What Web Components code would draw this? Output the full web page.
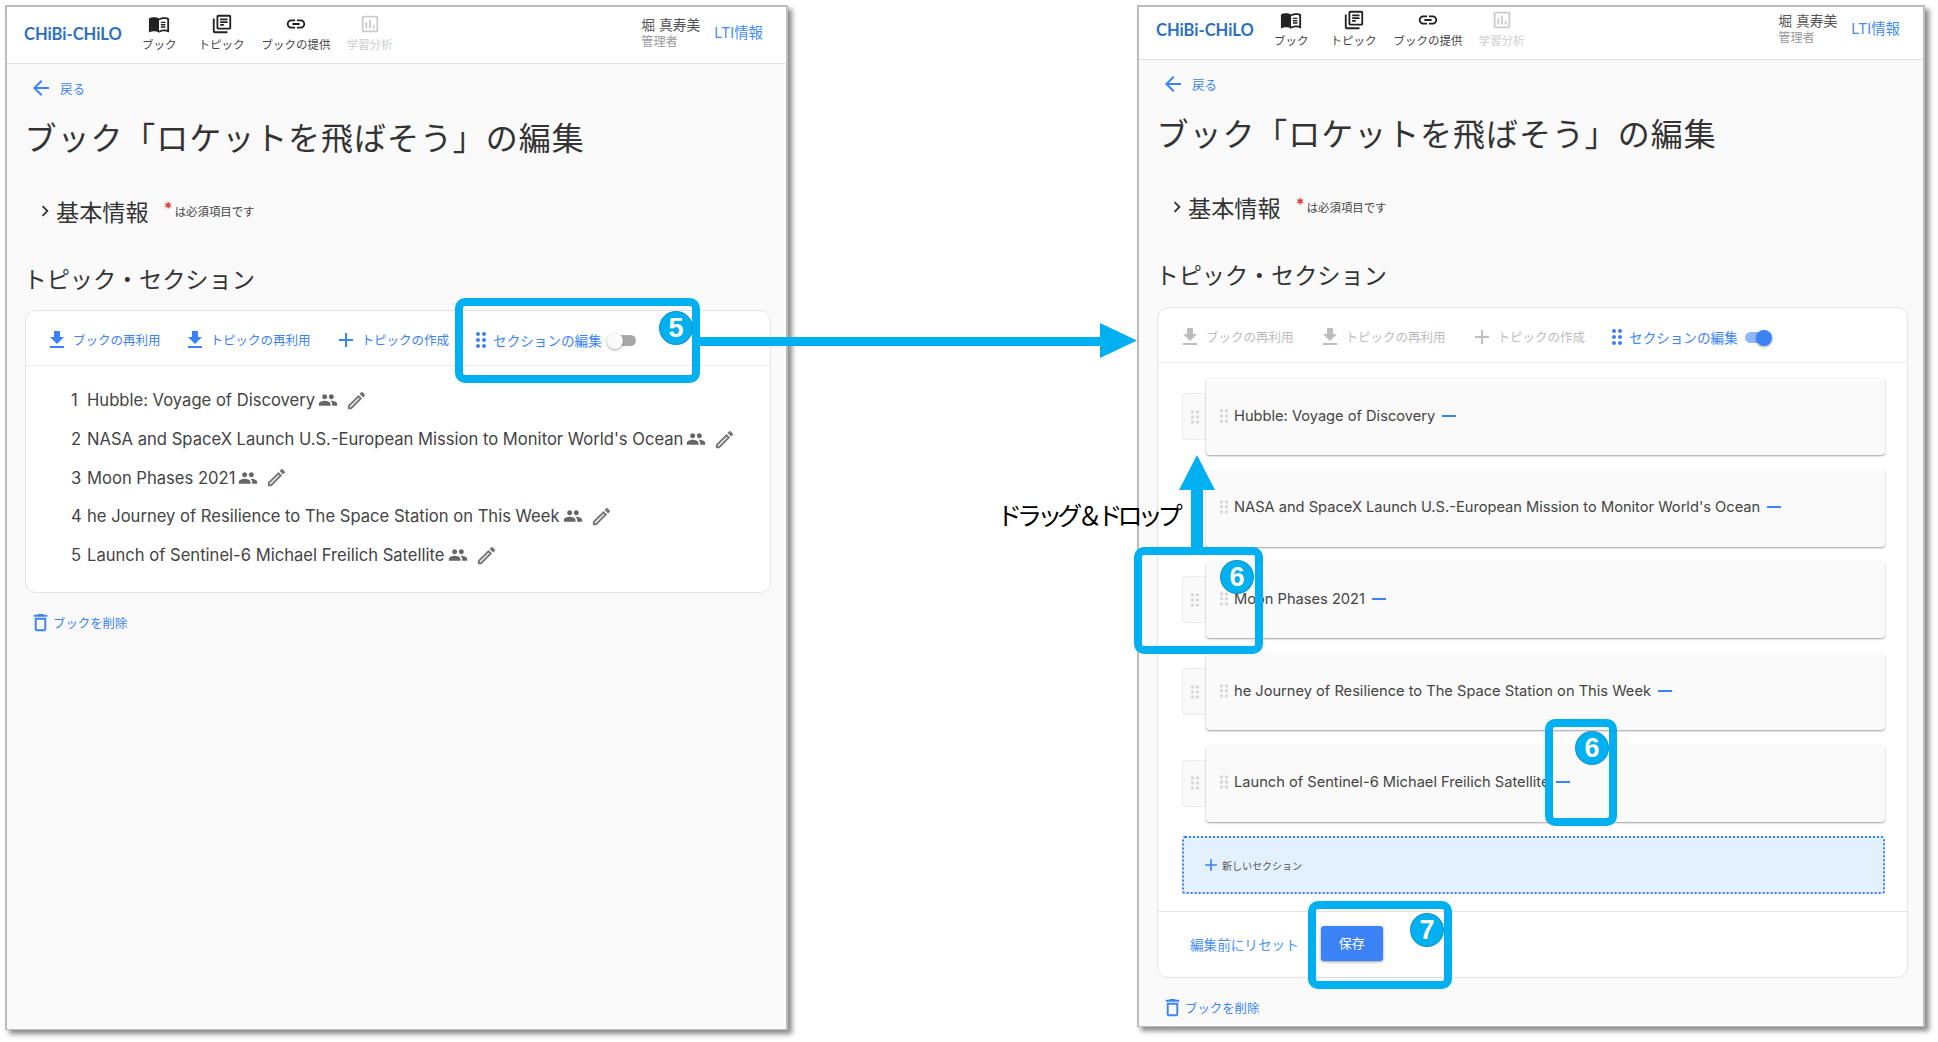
<!DOCTYPE html>
<html lang="ja">
<head>
<meta charset="utf-8">
<title>ブックの編集</title>
<style>
  html, body { margin: 0; padding: 0; background: #fff; }
  body { width: 1938px; height: 1042px; position: relative; overflow: hidden; font-family: Inter, "Noto Sans CJK JP", sans-serif; }
</style>
</head>
<body>
<book-window style="left:5px;top:5px;width:783px;height:1025px;--head-pad:6px;--head-h:57px">
  <topic-toolbar></topic-toolbar>
  <topic-row num="1" name="Hubble: Voyage of Discovery"></topic-row>
  <topic-row num="2" name="NASA and SpaceX Launch U.S.-European Mission to Monitor World's Ocean"></topic-row>
  <topic-row num="3" name="Moon Phases 2021"></topic-row>
  <topic-row num="4" name="he Journey of Resilience to The Space Station on This Week"></topic-row>
  <topic-row num="5" name="Launch of Sentinel-6 Michael Freilich Satellite"></topic-row>
</book-window>

<book-window edit style="left:1137px;top:5px;width:788px;height:1022px;--head-pad:2px;--head-h:53px">
  <topic-toolbar edit></topic-toolbar>
  <section-row name="Hubble: Voyage of Discovery"></section-row>
  <section-row name="NASA and SpaceX Launch U.S.-European Mission to Monitor World's Ocean" nohandle></section-row>
  <section-row name="Moon Phases 2021"></section-row>
  <section-row name="he Journey of Resilience to The Space Station on This Week"></section-row>
  <section-row name="Launch of Sentinel-6 Michael Freilich Satellite"></section-row>
  <new-section></new-section>
  <edit-footer slot="footer"></edit-footer>
</book-window>

<note-overlay></note-overlay>

<script>
const ICONS = {
  book: '<path d="M21 5c-1.11-.35-2.33-.5-3.5-.5-1.95 0-4.05.4-5.5 1.5-1.45-1.1-3.55-1.5-5.5-1.5S2.45 4.9 1 6v14.65c0 .25.25.5.5.5.1 0 .15-.05.25-.05C3.1 20.45 5.05 20 6.5 20c1.95 0 4.05.4 5.5 1.5 1.35-.85 3.8-1.5 5.5-1.5 1.65 0 3.35.3 4.75 1.05.1.05.15.05.25.05.25 0 .5-.25.5-.5V6c-.6-.45-1.25-.75-2-1zm0 13.5c-1.1-.35-2.3-.5-3.5-.5-1.7 0-4.15.65-5.5 1.5V8c1.35-.85 3.8-1.5 5.5-1.5 1.2 0 2.4.15 3.5.5v11.5z"/><path d="M14 9.500h5V11h-5zM14 12h5v1.500h-5zM14 14.500h5V16h-5z"/>',
  topic: '<path d="M4 6H2v14c0 1.1.9 2 2 2h14v-2H4V6zm16-4H8c-1.1 0-2 .9-2 2v12c0 1.1.9 2 2 2h12c1.1 0 2-.9 2-2V4c0-1.1-.9-2-2-2zm0 14H8V4h12v12zM10 9h8v2h-8zm0 3h4v2h-4zm0-6h8v2h-8z"/>',
  link: '<path d="M3.9 12c0-1.71 1.39-3.1 3.1-3.1h4V7H7c-2.76 0-5 2.24-5 5s2.24 5 5 5h4v-1.9H7c-1.71 0-3.1-1.39-3.1-3.1zM8 13h8v-2H8v2zm9-6h-4v1.9h4c1.71 0 3.1 1.39 3.1 3.1s-1.39 3.1-3.1 3.1h-4V17h4c2.76 0 5-2.24 5-5s-2.24-5-5-5z"/>',
  chart: '<path d="M19 3H5c-1.1 0-2 .9-2 2v14c0 1.1.9 2 2 2h14c1.1 0 2-.9 2-2V5c0-1.1-.9-2-2-2zm0 16H5V5h14v14zM7 10h2v7H7zm4-3h2v10h-2zm4 6h2v4h-2z"/>',
  back: '<path d="M20 11H7.83l5.59-5.59L12 4l-8 8 8 8 1.41-1.41L7.83 13H20v-2z"/>',
  chevron: '<path d="M10 6L8.59 7.41 13.17 12l-4.58 4.59L10 18l6-6z"/>',
  download: '<path d="M19 9h-4V3H9v6H5l7 7 7-7zM5 18v2h14v-2H5z"/>',
  add: '<path d="M19 13h-6v6h-2v-6H5v-2h6V5h2v6h6v2z"/>',
  drag: '<path d="M11 18c0 1.1-.9 2-2 2s-2-.9-2-2 .9-2 2-2 2 .9 2 2zm-2-8c-1.1 0-2 .9-2 2s.9 2 2 2 2-.9 2-2-.9-2-2-2zm0-6c-1.1 0-2 .9-2 2s.9 2 2 2 2-.9 2-2-.9-2-2-2zm6 4c1.1 0 2-.9 2-2s-.9-2-2-2-2 .9-2 2 .9 2 2 2zm0 2c-1.1 0-2 .9-2 2s.9 2 2 2 2-.9 2-2-.9-2-2-2zm0 6c-1.1 0-2 .9-2 2s.9 2 2 2 2-.9 2-2-.9-2-2-2z"/>',
  people: '<path d="M16 11c1.66 0 2.99-1.34 2.99-3S17.66 5 16 5c-1.66 0-3 1.34-3 3s1.34 3 3 3zm-8 0c1.66 0 2.99-1.34 2.99-3S9.66 5 8 5C6.34 5 5 6.34 5 8s1.34 3 3 3zm0 2c-2.33 0-7 1.17-7 3.5V19h14v-2.5c0-2.33-4.67-3.5-7-3.5zm8 0c-.29 0-.62.02-.97.05 1.16.84 1.97 1.97 1.97 3.45V19h6v-2.5c0-2.33-4.67-3.5-7-3.5z"/>',
  edit: '<path d="M14.06 9.02l.92.92L5.92 19H5v-.92l9.06-9.06M17.66 3c-.25 0-.51.1-.7.29l-1.83 1.83 3.75 3.75 1.83-1.83c.39-.39.39-1.02 0-1.41l-2.34-2.34c-.2-.2-.45-.29-.71-.29zm-3.6 3.19L3 17.25V21h3.75L17.81 9.94l-3.75-3.75z"/>',
  trash: '<path d="M6 19c0 1.1.9 2 2 2h8c1.1 0 2-.9 2-2V7H6v12zM8 9h8v10H8V9zm7.5-5l-1-1h-5l-1 1H5v2h14V4z"/>'
};
const icon = (name, size, color) =>
  `<svg width="${size}" height="${size}" viewBox="0 0 24 24" fill="${color}" style="flex:none;display:block">${ICONS[name]}</svg>`;
const BLUE = "#3b82f6";

class BookHeader extends HTMLElement {
  constructor() { super(); this.attachShadow({mode: "open"}); }
  connectedCallback() {
    const navs = [
      ["book", "ブック", "#222", "#444", 0],
      ["topic", "トピック", "#222", "#444", 22],
      ["link", "ブックの提供", "#222", "#444", 17],
      ["chart", "学習分析", "#ccc", "#ccc", 16]
    ];
    this.shadowRoot.innerHTML = `
    <style>
      :host { display: flex; align-items: flex-start; box-sizing: border-box; height: var(--head-h); padding: var(--head-pad) 23px 0 17px; background: #fff; border-bottom: 1px solid #e0e0e0; flex: none; }
      #logo { font: 700 16.5px/42px Lato, Roboto, sans-serif; color: #2a6fc4; width: 104px; flex: none; white-space: nowrap; }
      nav { display: flex; margin-left: 14px; }
      .item { display: flex; flex-direction: column; align-items: center; font-size: 11.5px; line-height: 16px; white-space: nowrap; gap: 2px; }
      .spacer { flex: 1; }
      #user { font-size: 13.8px; line-height: 17px; color: #555; margin-right: 14px; padding-top: 4px; white-space: nowrap; }
      #user small { display: block; font-size: 12.2px; line-height: 14px; margin-top: 1px; color: #999; }
      #lti { font-size: 14.4px; line-height: 40px; color: #3f8cf3; white-space: nowrap; }
    </style>
    <div id="logo">CHiBi-CHiLO</div>
    <nav>${navs.map(n => `<div class="item" style="color:${n[3]};margin-left:${n[4]}px">${icon(n[0], 22, n[2])}<span>${n[1]}</span></div>`).join("")}</nav>
    <div class="spacer"></div>
    <div id="user">堀 真寿美<small>管理者</small></div>
    <div id="lti">LTI情報</div>`;
  }
}
customElements.define("book-header", BookHeader);

class BookWindow extends HTMLElement {
  constructor() { super(); this.attachShadow({mode: "open"}); }
  connectedCallback() {
    const edit = this.hasAttribute("edit");
    this.shadowRoot.innerHTML = `
    <style>
      :host { display: flex; flex-direction: column; position: absolute; box-sizing: border-box; background: #fafafa; border: 2px solid #bdbdbd; border-bottom-width: 1px; box-shadow: 4px 4px 5px #8a8a8a; color: #333; font-family: Inter, "Noto Sans CJK JP", sans-serif; overflow: hidden; }
      #body { flex: 1; display: flex; flex-direction: column; padding: 0 15px 0 18px; }
      #back { height: 48px; display: flex; align-items: center; gap: 7px; font-size: 12.500px; color: ${BLUE}; padding-left: 4px; flex: none; }
      h1 { margin: 0 0 0 -.5px; height: 52px; font: 400 32px/48px "Noto Sans CJK JP", sans-serif; letter-spacing: .95px; color: #333; white-space: nowrap; flex: none; }
      #basic { box-sizing: border-box; height: 96px; display: flex; align-items: center; padding: 0 0 2px 9px; flex: none; }
      #basic b { font: 400 23.200px/30px "Noto Sans CJK JP", sans-serif; }
      #basic i { font-style: normal; font-weight: 700; color: #e53935; font-size: 16px; line-height: 16px; margin: -6px 0 0 15px; }
      #basic span { font-size: 11.400px; margin-left: 2px; color: #444; }
      h2 { margin: 0 0 ${edit ? 13 : 12}px -1.5px; height: 38px; font: 400 23.200px/36px "Noto Sans CJK JP", sans-serif; color: #333; flex: none; }
      #card { background: #fff; border: 1px solid #e3e3e3; border-radius: 11px; flex: none; }
      #list { padding: ${edit ? "15px 22px 17px 24px" : "15px 0 18px 45px"}; display: flex; flex-direction: column; gap: ${edit ? "14.7px" : "0"}; }
      #del { display: flex; align-items: center; gap: 1px; font-size: 12.400px; color: ${BLUE}; margin-top: 18px; padding-left: 4px; }
    </style>
    <book-header></book-header>
    <div id="body">
      <div id="back">${icon("back", 24, BLUE)}<span>戻る</span></div>
      <h1>ブック「ロケットを飛ばそう」の編集</h1>
      <div id="basic">${icon("chevron", 22, "#333")}<b>基本情報</b><i>*</i><span>は必須項目です</span></div>
      <h2>トピック・セクション</h2>
      <div id="card">
        <slot name="toolbar"></slot>
        <div id="list"><slot></slot></div>
        <slot name="footer"></slot>
      </div>
      <div id="del">${icon("trash", 23, BLUE)}<span>ブックを削除</span></div>
    </div>`;
    this.querySelector("topic-toolbar").slot = "toolbar";
  }
}
customElements.define("book-window", BookWindow);

class TopicToolbar extends HTMLElement {
  constructor() { super(); this.attachShadow({mode: "open"}); }
  connectedCallback() {
    const edit = this.hasAttribute("edit");
    const c = edit ? "#bdbdbd" : BLUE;
    const actions = [
      ["download", "ブックの再利用", 0],
      ["download", "トピックの再利用", edit ? 24 : 22],
      ["add", "トピックの作成", edit ? 24 : 23]
    ];
    this.shadowRoot.innerHTML = `
    <style>
      :host { display: flex; align-items: center; box-sizing: border-box; height: 55px; padding: 3px 0 0 ${edit ? 20 : 19}px; border-bottom: 1px solid #ebebeb; font-size: 12.5px; white-space: nowrap; }
      .a { display: flex; align-items: center; gap: 4px; color: ${c}; }
      #sec { display: flex; align-items: center; color: ${BLUE}; margin-left: ${edit ? 20 : 20}px; font-size: 13.6px; }
      #toggle { position: relative; width: ${edit ? 25 : 22}px; height: 11px; border-radius: 6px; margin: 2px 0 0 ${edit ? 7 : 12}px; background: ${edit ? "#8fb9fa" : "#a8a8a8"}; }
      #toggle::after { content: ""; position: absolute; top: -2.5px; ${edit ? "right:-2px" : "left:-7px"}; width: 16px; height: 16px; border-radius: 50%; background: ${edit ? BLUE : "#fafafa"}; box-shadow: 0 1px 3px rgba(0,0,0,.35); }
    </style>
    ${actions.map(a => `<div class="a" style="margin-left:${a[2]}px">${icon(a[0], 24, c)}<span>${a[1]}</span></div>`).join("")}
    <div id="sec">${icon("drag", 24, BLUE)}<span>セクションの編集</span><div id="toggle"></div></div>`;
  }
}
customElements.define("topic-toolbar", TopicToolbar);

class TopicRow extends HTMLElement {
  constructor() { super(); this.attachShadow({mode: "open"}); }
  connectedCallback() {
    this.shadowRoot.innerHTML = `
    <style>
      :host { display: flex; align-items: center; height: 38.7px; font-size: 16.6px; color: #444; white-space: nowrap; }
      #n { width: 16px; flex: none; }
      #t { margin-right: 3px; }
      svg:last-child { margin-left: 7px; }
    </style>
    <span id="n">${this.getAttribute("num")}</span><span id="t">${this.getAttribute("name")}</span>${icon("people", 20, "#666")}${icon("edit", 23, "#777")}`;
  }
}
customElements.define("topic-row", TopicRow);

class SectionRow extends HTMLElement {
  constructor() { super(); this.attachShadow({mode: "open"}); }
  connectedCallback() {
    const tab = !this.hasAttribute("nohandle");
    this.shadowRoot.innerHTML = `
    <style>
      :host { display: flex; align-items: center; height: 77px; font-size: 14.65px; color: #444; white-space: nowrap; }
      #tab { box-sizing: border-box; width: 24px; height: 47px; background: #fafafa; border-radius: 4px 0 0 4px; border: 1px solid #ececec; border-right: 0; display: flex; align-items: center; justify-content: center; flex: none; }
      #tab.off { background: none; border-color: transparent; }
      #card { flex: 1; height: 77px; box-sizing: border-box; background: #fafafa; border-radius: 4px; box-shadow: 0 1px 2px rgba(0,0,0,.38); display: flex; align-items: center; padding: 0 0 2px 8px; }
      #minus { width: 14px; height: 2px; background: ${BLUE}; margin-left: 7px; }
    </style>
    <div id="tab" class="${tab ? "" : "off"}">${tab ? icon("drag", 20, "#d8d8d8") : ""}</div>
    <div id="card">${icon("drag", 20, "#d8d8d8")}<span>${this.getAttribute("name")}</span><div id="minus"></div></div>`;
  }
}
customElements.define("section-row", SectionRow);

class NewSection extends HTMLElement {
  constructor() { super(); this.attachShadow({mode: "open"}); }
  connectedCallback() {
    this.shadowRoot.innerHTML = `
    <style>
      :host { display: flex; align-items: center; gap: 1px; box-sizing: border-box; height: 58px; padding-left: 17px; background: #e3f0fd; border: 2px dotted ${BLUE}; border-radius: 3px; font-size: 10px; color: #555; }
    </style>
    ${icon("add", 20, BLUE)}<span>新しいセクション</span>`;
  }
}
customElements.define("new-section", NewSection);

class EditFooter extends HTMLElement {
  constructor() { super(); this.attachShadow({mode: "open"}); }
  connectedCallback() {
    this.shadowRoot.innerHTML = `
    <style>
      :host { display: flex; align-items: center; box-sizing: border-box; height: 66px; padding: 0 0 2px 32px; border-top: 1px solid #e3e3e3; font-size: 13.6px; }
      span { color: #4a90f5; }
      button { all: unset; box-sizing: border-box; width: 62px; height: 35px; margin-left: 22px; background: ${BLUE}; color: #fff; font: 13px Inter, "Noto Sans CJK JP", sans-serif; text-align: center; line-height: 35px; border-radius: 3px; box-shadow: 0 1px 3px rgba(0,0,0,.4); }
    </style>
    <span>編集前にリセット</span><button>保存</button>`;
  }
}
customElements.define("edit-footer", EditFooter);

class NoteOverlay extends HTMLElement {
  constructor() { super(); this.attachShadow({mode: "open"}); }
  connectedCallback() {
    const boxes = [[455, 298, 245, 85], [1134, 547, 129, 107], [1545, 719, 72, 107], [1308, 901, 144, 88]];
    const badges = [[676, 328, 5], [1237, 577, 6], [1592, 748, 6], [1427, 930, 7]];
    this.shadowRoot.innerHTML = `
    <style>
      :host { position: absolute; inset: 0; pointer-events: none; }
      .box { position: absolute; box-sizing: border-box; border: 8px solid #00b0f0; border-radius: 10px; }
      .badge { position: absolute; width: 32px; height: 32px; border-radius: 50%; background: #00b0f0; box-shadow: 0 0 0 1px #0d93c4; color: #fff; font: 700 27px/32px "Liberation Sans", sans-serif; text-align: center; }
      #dnd { position: absolute; left: 997px; top: 497px; font: 400 25px/34px "Noto Sans CJK JP", sans-serif; letter-spacing: -4.900px; color: #000; white-space: nowrap; }
      svg { position: absolute; left: 0; top: 0; }
    </style>
    <svg width="1938" height="1042">
      <path d="M700 337H1100V323L1137 340.500L1100 358V346H700Z" fill="#00b0f0"/>
      <path d="M1191 547V490H1179L1197 455L1215 490H1203V547Z" fill="#00b0f0"/>
    </svg>
    <div id="dnd">ドラッグ＆ドロップ</div>
    ${boxes.map(b => `<div class="box" style="left:${b[0]}px;top:${b[1]}px;width:${b[2]}px;height:${b[3]}px"></div>`).join("")}
    ${badges.map(b => `<div class="badge" style="left:${b[0] - 16}px;top:${b[1] - 16}px">${b[2]}</div>`).join("")}`;
  }
}
customElements.define("note-overlay", NoteOverlay);
</script>
</body>
</html>
